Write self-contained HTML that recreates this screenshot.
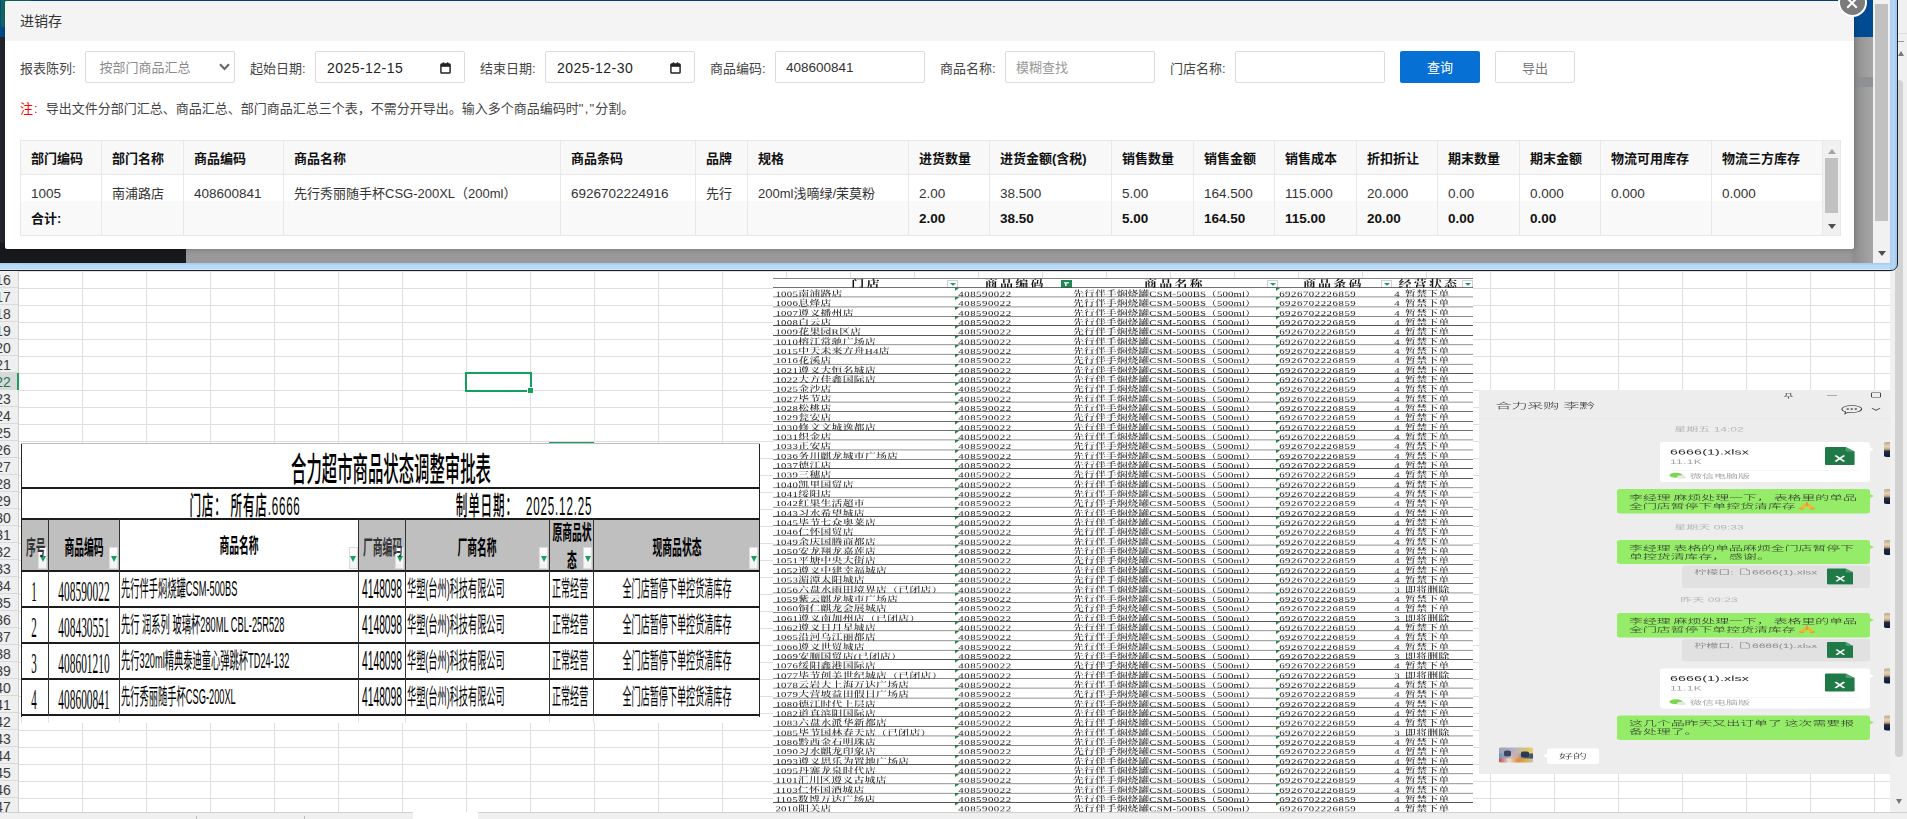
<!DOCTYPE html>
<html lang="zh-CN">
<head>
<meta charset="utf-8">
<title>进销存</title>
<style>
*{box-sizing:border-box;margin:0;padding:0}
html,body{width:1907px;height:819px;overflow:hidden;background:#fff}
body{position:relative;font-family:"Liberation Sans","Noto Sans CJK SC",sans-serif;font-size:13px;color:#333}
.abs{position:absolute}
/* ---------- excel sheet ---------- */
#sheet{position:absolute;left:0;top:270px;width:1890px;height:542px;background:#fff;overflow:hidden}
#grid{position:absolute;left:18px;top:0;width:1872px;height:542px;
 background-image:
  linear-gradient(to right,transparent 63px,#dfdfdf 63px),
  linear-gradient(to bottom,transparent 16px,#dfdfdf 16px);
 background-size:64px 100%,100% 17px;background-position:1px 0,0 2px}
#rowhdr{position:absolute;left:0;top:0;width:19px;height:542px;background:#efefef;border-right:1px solid #cfcfcf;overflow:hidden}
#rowhdr div{position:absolute;left:0;width:18px;height:17px;border-bottom:1px solid #dadada}
#rowhdr div span{position:absolute;right:7.5px;top:0;line-height:19px;font-size:14px;color:#3c3c3c;letter-spacing:-.2px;white-space:nowrap}
#rowhdr div.sel{background:#d9d9d9;border-right:2px solid #14a05f;width:19px}
#rowhdr div.sel span{color:#1b7a4e;right:6.5px}
/* ---------- browser window chrome ---------- */
#win{position:absolute;left:0;top:0;width:1899px;height:271px;overflow:hidden}
#modal{position:absolute;left:5px;top:1px;width:1849px;height:248px;background:#fff;border-radius:2px;box-shadow:0 0 6px rgba(0,0,0,.25)}
#mtitle{position:absolute;left:0;top:0;width:100%;height:40px;background:#f4f4f4;border-radius:2px 2px 0 0;font-size:14px;line-height:40px;padding-left:15px;color:#333}
.lbl{position:absolute;top:52px;height:31px;line-height:31px;font-size:13px;color:#444;white-space:nowrap}
.inp{position:absolute;top:50px;width:150px;height:32px;border:1px solid #dcdcdc;border-radius:2px;background:#fff;line-height:32px;font-size:13px;padding-left:10px;white-space:nowrap;color:#333}
.btn{position:absolute;top:50px;width:80px;height:32px;line-height:34px;text-align:center;font-size:13px;border-radius:2px}
#tbl{position:absolute;left:15px;top:139px;width:1821px;height:96px;border:1px solid #e8e8e8;background:#fff;overflow:hidden}
#tbl .c{position:absolute;white-space:nowrap;padding-left:10px;border-right:1px solid #e8e8e8;overflow:hidden}
#tbl .h{top:0;height:34px;line-height:36px;font-weight:bold;background:#f8f8f8;color:#111;border-bottom:1px solid #e8e8e8}
#tbl .d{top:34px;height:26px;line-height:37px;color:#333}
#tbl .f{top:60px;height:35px;line-height:35px;font-weight:bold;background:#f9f9f9;color:#111}
.ft{position:absolute;white-space:nowrap;line-height:1;display:inline-block}
/* ---------- list picture ---------- */
#list{position:absolute;transform-origin:0 0;background:#fff;font-family:"Liberation Serif","Noto Serif CJK SC",serif;font-size:10.8px;color:#1a1a1a;overflow:hidden;will-change:transform}
#list .lr{font-weight:500}
#list .lh,#list .lr{position:relative;border-bottom:1.25px solid #4a4a4a;white-space:nowrap;overflow:hidden}
#list .lh{border-top:1.25px solid #666;font-weight:bold;font-size:13px;color:#111;letter-spacing:2.2px}
#list .lh span{position:absolute;top:0;transform:translateX(-50%)}
#list .lr span{position:absolute;top:0;letter-spacing:.35px}
#list .lr span.g{letter-spacing:.53px}
#list .lr span.g:before{content:"";position:absolute;left:-3px;top:0;border-top:4px solid #1d8a3a;border-right:4px solid transparent}
#list .lr b{display:inline-block;width:5px}
#list .fb{position:absolute;top:1.5px;width:11px;height:11px;background:#fff;border:.6px solid #d0d0d0}
#list .fb:after{content:"";position:absolute;left:2.2px;top:3.6px;border-left:3px solid transparent;border-right:3px solid transparent;border-top:4px solid #1f9a62}
#list .fbg{position:absolute;top:2px;width:11px;height:10px;background:#1f8a55}
#list .fbg:after{content:"";position:absolute;left:3px;top:2.5px;width:5px;height:5px;background:linear-gradient(#fff,#fff) 0 0/5px 1.5px no-repeat,linear-gradient(#fff,#fff) 1.7px 0/1.6px 5px no-repeat}
/* ---------- wechat picture ---------- */
#wx{position:absolute;width:412px;height:766.6px;background:#ededed;transform-origin:0 0;transform:scaleY(.5);overflow:hidden;will-change:transform;font-family:"Liberation Sans","Noto Sans CJK SC",sans-serif}
#wx .wb{position:absolute;background:#95ec69;border-radius:4px}
#wx .wt{position:absolute;font-size:13.9px;word-spacing:-1px;line-height:20px;color:#262626;white-space:nowrap;font-weight:300}
#wx .wts{position:absolute;left:130px;width:200px;text-align:center;font-size:12px;line-height:16px;color:#b4b4b4;white-space:nowrap}
</style>
</head>
<body>

<div id="sheet">
<div id="grid"></div>
<div id="rowhdr">
<div style="top:1px"><span>16</span></div>
<div style="top:18px"><span>17</span></div>
<div style="top:35px"><span>18</span></div>
<div style="top:52px"><span>19</span></div>
<div style="top:69px"><span>20</span></div>
<div style="top:86px"><span>21</span></div>
<div class="sel" style="top:103px"><span>22</span></div>
<div style="top:120px"><span>23</span></div>
<div style="top:137px"><span>24</span></div>
<div style="top:154px"><span>25</span></div>
<div style="top:171px"><span>26</span></div>
<div style="top:188px"><span>27</span></div>
<div style="top:205px"><span>28</span></div>
<div style="top:222px"><span>29</span></div>
<div style="top:239px"><span>30</span></div>
<div style="top:256px"><span>31</span></div>
<div style="top:273px"><span>32</span></div>
<div style="top:290px"><span>33</span></div>
<div style="top:307px"><span>34</span></div>
<div style="top:324px"><span>35</span></div>
<div style="top:341px"><span>36</span></div>
<div style="top:358px"><span>37</span></div>
<div style="top:375px"><span>38</span></div>
<div style="top:392px"><span>39</span></div>
<div style="top:409px"><span>40</span></div>
<div style="top:426px"><span>41</span></div>
<div style="top:443px"><span>42</span></div>
<div style="top:460px"><span>43</span></div>
<div style="top:477px"><span>44</span></div>
<div style="top:494px"><span>45</span></div>
<div style="top:511px"><span>46</span></div>
<div style="top:528px"><span>47</span></div>
<div style="top:545px"><span>48</span></div>
</div>
<div class="abs" style="left:465px;top:102px;width:67px;height:20px;border:2px solid #14a05f"></div>
<div class="abs" style="left:527px;top:117px;width:7px;height:7px;background:#14a05f;border:1px solid #fff"></div>
<div class="abs" style="left:549px;top:172px;width:45px;height:2px;background:#14a05f"></div>
<div class="abs" style="left:17px;top:103px;width:2px;height:17px;background:#14a05f"></div>
<div id="form">
<div class="abs" style="left:21px;top:173.5px;width:739px;height:279px;background:#fff;"></div>
<div class="abs" style="left:20.8px;top:446px;width:1px;height:6.5px;background:#e4e4e4;"></div>
<div class="abs" style="left:47.8px;top:446px;width:1px;height:6.5px;background:#e4e4e4;"></div>
<div class="abs" style="left:118.9px;top:446px;width:1px;height:6.5px;background:#e4e4e4;"></div>
<div class="abs" style="left:358.2px;top:446px;width:1px;height:6.5px;background:#e4e4e4;"></div>
<div class="abs" style="left:404.8px;top:446px;width:1px;height:6.5px;background:#e4e4e4;"></div>
<div class="abs" style="left:548.8px;top:446px;width:1px;height:6.5px;background:#e4e4e4;"></div>
<div class="abs" style="left:593.0px;top:446px;width:1px;height:6.5px;background:#e4e4e4;"></div>
<div class="abs" style="left:21.3px;top:249px;width:26.999999999999996px;height:52px;background:#bfbfbf;"></div>
<div class="abs" style="left:48.3px;top:249px;width:71.10000000000001px;height:52px;background:#bfbfbf;"></div>
<div class="abs" style="left:358.7px;top:249px;width:46.60000000000002px;height:52px;background:#bfbfbf;"></div>
<div class="abs" style="left:405.3px;top:249px;width:143.99999999999994px;height:52px;background:#bfbfbf;"></div>
<div class="abs" style="left:549.3px;top:249px;width:44.200000000000045px;height:52px;background:#bfbfbf;"></div>
<div class="abs" style="left:593.5px;top:249px;width:166.0px;height:52px;background:#bfbfbf;"></div>
<div class="abs" style="left:21px;top:173px;width:739px;height:1px;background:#bdbdbd;"></div>
<div class="abs" style="left:21px;top:217.2px;width:739px;height:1.6px;background:#1c1c1c;"></div>
<div class="abs" style="left:21px;top:248.10000000000002px;width:739px;height:1.8px;background:#1c1c1c;"></div>
<div class="abs" style="left:21px;top:300.0px;width:739px;height:2px;background:#1c1c1c;"></div>
<div class="abs" style="left:21px;top:336.1px;width:739px;height:1.8px;background:#1c1c1c;"></div>
<div class="abs" style="left:21px;top:372.1px;width:739px;height:1.8px;background:#1c1c1c;"></div>
<div class="abs" style="left:21px;top:408.1px;width:739px;height:1.8px;background:#1c1c1c;"></div>
<div class="abs" style="left:21px;top:444.1px;width:739px;height:1.8px;background:#1c1c1c;"></div>
<div class="abs" style="left:20.7px;top:173.5px;width:1.3px;height:273px;background:#222;"></div>
<div class="abs" style="left:759px;top:173.5px;width:1.4px;height:273px;background:#222;"></div>
<div class="abs" style="left:47.699999999999996px;top:249px;width:1.2px;height:197px;background:#333;"></div>
<div class="abs" style="left:118.80000000000001px;top:249px;width:1.2px;height:197px;background:#333;"></div>
<div class="abs" style="left:358.09999999999997px;top:249px;width:1.2px;height:197px;background:#333;"></div>
<div class="abs" style="left:404.7px;top:249px;width:1.2px;height:197px;background:#333;"></div>
<div class="abs" style="left:548.6999999999999px;top:249px;width:1.2px;height:197px;background:#333;"></div>
<div class="abs" style="left:592.9px;top:249px;width:1.2px;height:197px;background:#333;"></div>
<div class="abs" style="left:38.099999999999994px;top:277.29999999999995px;width:9px;height:22.2px;background:linear-gradient(to bottom,#ffffff,#f2f2f2);border:0.5px solid #dcdcdc"></div>
<div class="abs" style="left:39.699999999999996px;top:285.9px;width:0;height:0;border-left:3px solid transparent;border-right:3px solid transparent;border-top:6px solid #1a9e63"></div>
<div class="abs" style="left:109.2px;top:277.29999999999995px;width:9px;height:22.2px;background:linear-gradient(to bottom,#ffffff,#f2f2f2);border:0.5px solid #dcdcdc"></div>
<div class="abs" style="left:110.8px;top:285.9px;width:0;height:0;border-left:3px solid transparent;border-right:3px solid transparent;border-top:6px solid #1a9e63"></div>
<div class="abs" style="left:348.5px;top:277.29999999999995px;width:9px;height:22.2px;background:linear-gradient(to bottom,#ffffff,#f2f2f2);border:0.5px solid #dcdcdc"></div>
<div class="abs" style="left:350.1px;top:285.9px;width:0;height:0;border-left:3px solid transparent;border-right:3px solid transparent;border-top:6px solid #1a9e63"></div>
<div class="abs" style="left:395.1px;top:277.29999999999995px;width:9px;height:22.2px;background:linear-gradient(to bottom,#ffffff,#f2f2f2);border:0.5px solid #dcdcdc"></div>
<div class="abs" style="left:396.70000000000005px;top:285.9px;width:0;height:0;border-left:3px solid transparent;border-right:3px solid transparent;border-top:6px solid #1a9e63"></div>
<div class="abs" style="left:539.0999999999999px;top:277.29999999999995px;width:9px;height:22.2px;background:linear-gradient(to bottom,#ffffff,#f2f2f2);border:0.5px solid #dcdcdc"></div>
<div class="abs" style="left:540.6999999999999px;top:285.9px;width:0;height:0;border-left:3px solid transparent;border-right:3px solid transparent;border-top:6px solid #1a9e63"></div>
<div class="abs" style="left:583.3px;top:277.29999999999995px;width:9px;height:22.2px;background:linear-gradient(to bottom,#ffffff,#f2f2f2);border:0.5px solid #dcdcdc"></div>
<div class="abs" style="left:584.9px;top:285.9px;width:0;height:0;border-left:3px solid transparent;border-right:3px solid transparent;border-top:6px solid #1a9e63"></div>
<div class="abs" style="left:749.3px;top:277.29999999999995px;width:9px;height:22.2px;background:linear-gradient(to bottom,#ffffff,#f2f2f2);border:0.5px solid #dcdcdc"></div>
<div class="abs" style="left:750.9px;top:285.9px;width:0;height:0;border-left:3px solid transparent;border-right:3px solid transparent;border-top:6px solid #1a9e63"></div>
<span class="ft" style="left:390.5px;top:198.5px;font-size:33px;font-weight:500;font-family:'Liberation Sans','Noto Sans CJK SC',sans-serif;color:#000;transform:translate(-50%,-50%) scaleX(0.466);">合力超市商品状态调整审批表</span>
<span class="ft" style="left:244.5px;top:235.5px;font-size:26px;font-weight:500;font-family:'Liberation Sans','Noto Sans CJK SC',sans-serif;color:#000;transform:translate(-50%,-50%) scaleX(0.445);letter-spacing:1.8px">门店： 所有店.6666</span>
<span class="ft" style="left:524px;top:235.5px;font-size:26px;font-weight:500;font-family:'Liberation Sans','Noto Sans CJK SC',sans-serif;color:#000;transform:translate(-50%,-50%) scaleX(0.445);letter-spacing:1.9px">制单日期：&nbsp; 2025.12.25</span>
<div class="abs" style="left:22.3px;top:265px;width:23.999999999999996px;height:26px;overflow:hidden"><span class="ft" style="left:4px;top:13px;font-size:20px;font-weight:bold;transform-origin:0 50%;transform:translateY(-50%) scaleX(.49)">序号</span></div>
<span class="ft" style="left:84.35px;top:277.5px;font-size:20px;font-weight:bold;font-family:'Liberation Sans','Noto Sans CJK SC',sans-serif;color:#000;transform:translate(-50%,-50%) scaleX(0.49);">商品编码</span>
<span class="ft" style="left:239.05px;top:276px;font-size:20px;font-weight:bold;font-family:'Liberation Sans','Noto Sans CJK SC',sans-serif;color:#000;transform:translate(-50%,-50%) scaleX(0.49);">商品名称</span>
<div class="abs" style="left:359.7px;top:265px;width:43.60000000000002px;height:26px;overflow:hidden"><span class="ft" style="left:3px;top:13px;font-size:20px;font-weight:bold;transform-origin:0 50%;transform:translateY(-50%) scaleX(.49)">厂商编码</span></div>
<span class="ft" style="left:477.29999999999995px;top:277.5px;font-size:20px;font-weight:bold;font-family:'Liberation Sans','Noto Sans CJK SC',sans-serif;color:#000;transform:translate(-50%,-50%) scaleX(0.49);">厂商名称</span>
<span class="ft" style="left:676.5px;top:277.5px;font-size:20px;font-weight:bold;font-family:'Liberation Sans','Noto Sans CJK SC',sans-serif;color:#000;transform:translate(-50%,-50%) scaleX(0.49);">现商品状态</span>
<span class="ft" style="left:571.5px;top:263px;font-size:20px;font-weight:bold;font-family:'Liberation Sans','Noto Sans CJK SC',sans-serif;color:#000;transform:translate(-50%,-50%) scaleX(0.49);">原商品状</span>
<span class="ft" style="left:572px;top:290.5px;font-size:20px;font-weight:bold;font-family:'Liberation Sans','Noto Sans CJK SC',sans-serif;color:#000;transform:translate(-50%,-50%) scaleX(0.49);">态</span>
<span class="ft" style="left:34.2px;top:321.0px;font-size:29px;font-weight:normal;font-family:'Liberation Serif','Noto Serif CJK SC',serif;color:#000;transform:translate(-50%,-50%) scaleX(0.38);">1</span>
<span class="ft" style="left:84.2px;top:321.5px;font-size:28.5px;font-weight:normal;font-family:'Liberation Serif','Noto Serif CJK SC',serif;color:#000;transform:translate(-50%,-50%) scaleX(0.4);">408590022</span>
<span class="ft" style="left:120.6px;top:318.70000000000005px;font-size:22px;font-weight:normal;font-family:'Liberation Sans','Noto Sans CJK SC',sans-serif;color:#000;transform-origin:0 50%;transform:translateY(-50%) scaleX(0.421);">先行伴手焖烧罐CSM-500BS</span>
<span class="ft" style="left:382px;top:318.5px;font-size:27.5px;font-weight:normal;font-family:'Liberation Sans','Noto Sans CJK SC',sans-serif;color:#000;transform:translate(-50%,-50%) scaleX(0.375);">4148098</span>
<span class="ft" style="left:406.8px;top:319.0px;font-size:22px;font-weight:normal;font-family:'Liberation Sans','Noto Sans CJK SC',sans-serif;color:#000;transform-origin:0 50%;transform:translateY(-50%) scaleX(0.416);">华塑(台州)科技有限公司</span>
<span class="ft" style="left:551.5px;top:319.0px;font-size:22px;font-weight:normal;font-family:'Liberation Sans','Noto Sans CJK SC',sans-serif;color:#000;transform-origin:0 50%;transform:translateY(-50%) scaleX(0.411);">正常经营</span>
<span class="ft" style="left:676.5px;top:319.0px;font-size:22px;font-weight:normal;font-family:'Liberation Sans','Noto Sans CJK SC',sans-serif;color:#000;transform:translate(-50%,-50%) scaleX(0.413);">全门店暂停下单控货清库存</span>
<span class="ft" style="left:34.2px;top:357.0px;font-size:29px;font-weight:normal;font-family:'Liberation Serif','Noto Serif CJK SC',serif;color:#000;transform:translate(-50%,-50%) scaleX(0.38);">2</span>
<span class="ft" style="left:84.2px;top:357.5px;font-size:28.5px;font-weight:normal;font-family:'Liberation Serif','Noto Serif CJK SC',serif;color:#000;transform:translate(-50%,-50%) scaleX(0.4);">408430551</span>
<span class="ft" style="left:120.6px;top:354.70000000000005px;font-size:22px;font-weight:normal;font-family:'Liberation Sans','Noto Sans CJK SC',sans-serif;color:#000;transform-origin:0 50%;transform:translateY(-50%) scaleX(0.421);">先行 润系列 玻璃杯280ML CBL-25R528</span>
<span class="ft" style="left:382px;top:354.5px;font-size:27.5px;font-weight:normal;font-family:'Liberation Sans','Noto Sans CJK SC',sans-serif;color:#000;transform:translate(-50%,-50%) scaleX(0.375);">4148098</span>
<span class="ft" style="left:406.8px;top:355.0px;font-size:22px;font-weight:normal;font-family:'Liberation Sans','Noto Sans CJK SC',sans-serif;color:#000;transform-origin:0 50%;transform:translateY(-50%) scaleX(0.416);">华塑(台州)科技有限公司</span>
<span class="ft" style="left:551.5px;top:355.0px;font-size:22px;font-weight:normal;font-family:'Liberation Sans','Noto Sans CJK SC',sans-serif;color:#000;transform-origin:0 50%;transform:translateY(-50%) scaleX(0.411);">正常经营</span>
<span class="ft" style="left:676.5px;top:355.0px;font-size:22px;font-weight:normal;font-family:'Liberation Sans','Noto Sans CJK SC',sans-serif;color:#000;transform:translate(-50%,-50%) scaleX(0.413);">全门店暂停下单控货清库存</span>
<span class="ft" style="left:34.2px;top:393.0px;font-size:29px;font-weight:normal;font-family:'Liberation Serif','Noto Serif CJK SC',serif;color:#000;transform:translate(-50%,-50%) scaleX(0.38);">3</span>
<span class="ft" style="left:84.2px;top:393.5px;font-size:28.5px;font-weight:normal;font-family:'Liberation Serif','Noto Serif CJK SC',serif;color:#000;transform:translate(-50%,-50%) scaleX(0.4);">408601210</span>
<span class="ft" style="left:120.6px;top:390.70000000000005px;font-size:22px;font-weight:normal;font-family:'Liberation Sans','Noto Sans CJK SC',sans-serif;color:#000;transform-origin:0 50%;transform:translateY(-50%) scaleX(0.421);">先行320ml精典泰迪童心弹跳杯TD24-132</span>
<span class="ft" style="left:382px;top:390.5px;font-size:27.5px;font-weight:normal;font-family:'Liberation Sans','Noto Sans CJK SC',sans-serif;color:#000;transform:translate(-50%,-50%) scaleX(0.375);">4148098</span>
<span class="ft" style="left:406.8px;top:391.0px;font-size:22px;font-weight:normal;font-family:'Liberation Sans','Noto Sans CJK SC',sans-serif;color:#000;transform-origin:0 50%;transform:translateY(-50%) scaleX(0.416);">华塑(台州)科技有限公司</span>
<span class="ft" style="left:551.5px;top:391.0px;font-size:22px;font-weight:normal;font-family:'Liberation Sans','Noto Sans CJK SC',sans-serif;color:#000;transform-origin:0 50%;transform:translateY(-50%) scaleX(0.411);">正常经营</span>
<span class="ft" style="left:676.5px;top:391.0px;font-size:22px;font-weight:normal;font-family:'Liberation Sans','Noto Sans CJK SC',sans-serif;color:#000;transform:translate(-50%,-50%) scaleX(0.413);">全门店暂停下单控货清库存</span>
<span class="ft" style="left:34.2px;top:429.25px;font-size:29px;font-weight:normal;font-family:'Liberation Serif','Noto Serif CJK SC',serif;color:#000;transform:translate(-50%,-50%) scaleX(0.38);">4</span>
<span class="ft" style="left:84.2px;top:429.75px;font-size:28.5px;font-weight:normal;font-family:'Liberation Serif','Noto Serif CJK SC',serif;color:#000;transform:translate(-50%,-50%) scaleX(0.4);">408600841</span>
<span class="ft" style="left:120.6px;top:426.95000000000005px;font-size:22px;font-weight:normal;font-family:'Liberation Sans','Noto Sans CJK SC',sans-serif;color:#000;transform-origin:0 50%;transform:translateY(-50%) scaleX(0.421);">先行秀丽随手杯CSG-200XL</span>
<span class="ft" style="left:382px;top:426.75px;font-size:27.5px;font-weight:normal;font-family:'Liberation Sans','Noto Sans CJK SC',sans-serif;color:#000;transform:translate(-50%,-50%) scaleX(0.375);">4148098</span>
<span class="ft" style="left:406.8px;top:427.25px;font-size:22px;font-weight:normal;font-family:'Liberation Sans','Noto Sans CJK SC',sans-serif;color:#000;transform-origin:0 50%;transform:translateY(-50%) scaleX(0.416);">华塑(台州)科技有限公司</span>
<span class="ft" style="left:551.5px;top:427.25px;font-size:22px;font-weight:normal;font-family:'Liberation Sans','Noto Sans CJK SC',sans-serif;color:#000;transform-origin:0 50%;transform:translateY(-50%) scaleX(0.411);">正常经营</span>
<span class="ft" style="left:676.5px;top:427.25px;font-size:22px;font-weight:normal;font-family:'Liberation Sans','Noto Sans CJK SC',sans-serif;color:#000;transform:translate(-50%,-50%) scaleX(0.413);">全门店暂停下单控货清库存</span>
</div>
<div id="list" style="left:773.4px;top:8.199999999999989px;width:699.6px;height:748.62px;transform:scaleY(0.715)">
<div class="lh" style="height:13.85px;line-height:13.85px">
<span style="left:93.4px">门店</span>
<span style="left:242.2px">商品编码</span>
<span style="left:401.4px">商品名称</span>
<span style="left:560.3px">商品条码</span>
<span style="left:655.9px">经营状态</span>
<i class="fb" style="left:173.8px"></i>
<i class="fb" style="left:494.2px"></i>
<i class="fb" style="left:608.3px"></i>
<i class="fb" style="left:689.1px"></i>
<i class="fbg" style="left:287.6px"></i>
</div>
<div class="lr" style="height:13.359px;line-height:16.159px"><span style="left:2.4px;letter-spacing:.32px">1005南浦路店</span><span class="g" style="left:185.3px">408590022</span><span style="left:300.1px;letter-spacing:.1px">先行伴手焖烧罐CSM-500BS（500ml）</span><span class="g" style="left:506.2px">6926702226859</span><span style="left:621.3px">4<b></b>暂禁下单</span></div>
<div class="lr" style="height:13.359px;line-height:16.159px"><span style="left:2.4px;letter-spacing:.32px">1006息烽店</span><span class="g" style="left:185.3px">408590022</span><span style="left:300.1px;letter-spacing:.1px">先行伴手焖烧罐CSM-500BS（500ml）</span><span class="g" style="left:506.2px">6926702226859</span><span style="left:621.3px">4<b></b>暂禁下单</span></div>
<div class="lr" style="height:13.359px;line-height:16.159px"><span style="left:2.4px;letter-spacing:.32px">1007遵义播州店</span><span class="g" style="left:185.3px">408590022</span><span style="left:300.1px;letter-spacing:.1px">先行伴手焖烧罐CSM-500BS（500ml）</span><span class="g" style="left:506.2px">6926702226859</span><span style="left:621.3px">4<b></b>暂禁下单</span></div>
<div class="lr" style="height:13.359px;line-height:16.159px"><span style="left:2.4px;letter-spacing:.32px">1008白云店</span><span class="g" style="left:185.3px">408590022</span><span style="left:300.1px;letter-spacing:.1px">先行伴手焖烧罐CSM-500BS（500ml）</span><span class="g" style="left:506.2px">6926702226859</span><span style="left:621.3px">4<b></b>暂禁下单</span></div>
<div class="lr" style="height:13.359px;line-height:16.159px"><span style="left:2.4px;letter-spacing:.32px">1009花果园R区店</span><span class="g" style="left:185.3px">408590022</span><span style="left:300.1px;letter-spacing:.1px">先行伴手焖烧罐CSM-500BS（500ml）</span><span class="g" style="left:506.2px">6926702226859</span><span style="left:621.3px">4<b></b>暂禁下单</span></div>
<div class="lr" style="height:13.359px;line-height:16.159px"><span style="left:2.4px;letter-spacing:.32px">1010榕江常驰广场店</span><span class="g" style="left:185.3px">408590022</span><span style="left:300.1px;letter-spacing:.1px">先行伴手焖烧罐CSM-500BS（500ml）</span><span class="g" style="left:506.2px">6926702226859</span><span style="left:621.3px">4<b></b>暂禁下单</span></div>
<div class="lr" style="height:13.359px;line-height:16.159px"><span style="left:2.4px;letter-spacing:.32px">1015中天未来方舟H4店</span><span class="g" style="left:185.3px">408590022</span><span style="left:300.1px;letter-spacing:.1px">先行伴手焖烧罐CSM-500BS（500ml）</span><span class="g" style="left:506.2px">6926702226859</span><span style="left:621.3px">4<b></b>暂禁下单</span></div>
<div class="lr" style="height:13.359px;line-height:16.159px"><span style="left:2.4px;letter-spacing:.32px">1016花溪店</span><span class="g" style="left:185.3px">408590022</span><span style="left:300.1px;letter-spacing:.1px">先行伴手焖烧罐CSM-500BS（500ml）</span><span class="g" style="left:506.2px">6926702226859</span><span style="left:621.3px">4<b></b>暂禁下单</span></div>
<div class="lr" style="height:13.359px;line-height:16.159px"><span style="left:2.4px;letter-spacing:.32px">1021遵义大恒名城店</span><span class="g" style="left:185.3px">408590022</span><span style="left:300.1px;letter-spacing:.1px">先行伴手焖烧罐CSM-500BS（500ml）</span><span class="g" style="left:506.2px">6926702226859</span><span style="left:621.3px">4<b></b>暂禁下单</span></div>
<div class="lr" style="height:13.359px;line-height:16.159px"><span style="left:2.4px;letter-spacing:.32px">1022大方佳鑫国际店</span><span class="g" style="left:185.3px">408590022</span><span style="left:300.1px;letter-spacing:.1px">先行伴手焖烧罐CSM-500BS（500ml）</span><span class="g" style="left:506.2px">6926702226859</span><span style="left:621.3px">4<b></b>暂禁下单</span></div>
<div class="lr" style="height:13.359px;line-height:16.159px"><span style="left:2.4px;letter-spacing:.32px">1025金沙店</span><span class="g" style="left:185.3px">408590022</span><span style="left:300.1px;letter-spacing:.1px">先行伴手焖烧罐CSM-500BS（500ml）</span><span class="g" style="left:506.2px">6926702226859</span><span style="left:621.3px">4<b></b>暂禁下单</span></div>
<div class="lr" style="height:13.359px;line-height:16.159px"><span style="left:2.4px;letter-spacing:.32px">1027毕节店</span><span class="g" style="left:185.3px">408590022</span><span style="left:300.1px;letter-spacing:.1px">先行伴手焖烧罐CSM-500BS（500ml）</span><span class="g" style="left:506.2px">6926702226859</span><span style="left:621.3px">4<b></b>暂禁下单</span></div>
<div class="lr" style="height:13.359px;line-height:16.159px"><span style="left:2.4px;letter-spacing:.32px">1028松桃店</span><span class="g" style="left:185.3px">408590022</span><span style="left:300.1px;letter-spacing:.1px">先行伴手焖烧罐CSM-500BS（500ml）</span><span class="g" style="left:506.2px">6926702226859</span><span style="left:621.3px">4<b></b>暂禁下单</span></div>
<div class="lr" style="height:13.359px;line-height:16.159px"><span style="left:2.4px;letter-spacing:.32px">1029瓮安店</span><span class="g" style="left:185.3px">408590022</span><span style="left:300.1px;letter-spacing:.1px">先行伴手焖烧罐CSM-500BS（500ml）</span><span class="g" style="left:506.2px">6926702226859</span><span style="left:621.3px">4<b></b>暂禁下单</span></div>
<div class="lr" style="height:13.359px;line-height:16.159px"><span style="left:2.4px;letter-spacing:.32px">1030修文文城逸都店</span><span class="g" style="left:185.3px">408590022</span><span style="left:300.1px;letter-spacing:.1px">先行伴手焖烧罐CSM-500BS（500ml）</span><span class="g" style="left:506.2px">6926702226859</span><span style="left:621.3px">4<b></b>暂禁下单</span></div>
<div class="lr" style="height:13.359px;line-height:16.159px"><span style="left:2.4px;letter-spacing:.32px">1031织金店</span><span class="g" style="left:185.3px">408590022</span><span style="left:300.1px;letter-spacing:.1px">先行伴手焖烧罐CSM-500BS（500ml）</span><span class="g" style="left:506.2px">6926702226859</span><span style="left:621.3px">4<b></b>暂禁下单</span></div>
<div class="lr" style="height:13.359px;line-height:16.159px"><span style="left:2.4px;letter-spacing:.32px">1033正安店</span><span class="g" style="left:185.3px">408590022</span><span style="left:300.1px;letter-spacing:.1px">先行伴手焖烧罐CSM-500BS（500ml）</span><span class="g" style="left:506.2px">6926702226859</span><span style="left:621.3px">4<b></b>暂禁下单</span></div>
<div class="lr" style="height:13.359px;line-height:16.159px"><span style="left:2.4px;letter-spacing:.32px">1036务川麒龙城市广场店</span><span class="g" style="left:185.3px">408590022</span><span style="left:300.1px;letter-spacing:.1px">先行伴手焖烧罐CSM-500BS（500ml）</span><span class="g" style="left:506.2px">6926702226859</span><span style="left:621.3px">4<b></b>暂禁下单</span></div>
<div class="lr" style="height:13.359px;line-height:16.159px"><span style="left:2.4px;letter-spacing:.32px">1037德江店</span><span class="g" style="left:185.3px">408590022</span><span style="left:300.1px;letter-spacing:.1px">先行伴手焖烧罐CSM-500BS（500ml）</span><span class="g" style="left:506.2px">6926702226859</span><span style="left:621.3px">4<b></b>暂禁下单</span></div>
<div class="lr" style="height:13.359px;line-height:16.159px"><span style="left:2.4px;letter-spacing:.32px">1039三穗店</span><span class="g" style="left:185.3px">408590022</span><span style="left:300.1px;letter-spacing:.1px">先行伴手焖烧罐CSM-500BS（500ml）</span><span class="g" style="left:506.2px">6926702226859</span><span style="left:621.3px">4<b></b>暂禁下单</span></div>
<div class="lr" style="height:13.359px;line-height:16.159px"><span style="left:2.4px;letter-spacing:.32px">1040凯里国贸店</span><span class="g" style="left:185.3px">408590022</span><span style="left:300.1px;letter-spacing:.1px">先行伴手焖烧罐CSM-500BS（500ml）</span><span class="g" style="left:506.2px">6926702226859</span><span style="left:621.3px">4<b></b>暂禁下单</span></div>
<div class="lr" style="height:13.359px;line-height:16.159px"><span style="left:2.4px;letter-spacing:.32px">1041绥阳店</span><span class="g" style="left:185.3px">408590022</span><span style="left:300.1px;letter-spacing:.1px">先行伴手焖烧罐CSM-500BS（500ml）</span><span class="g" style="left:506.2px">6926702226859</span><span style="left:621.3px">4<b></b>暂禁下单</span></div>
<div class="lr" style="height:13.359px;line-height:16.159px"><span style="left:2.4px;letter-spacing:.32px">1042红果生活超市</span><span class="g" style="left:185.3px">408590022</span><span style="left:300.1px;letter-spacing:.1px">先行伴手焖烧罐CSM-500BS（500ml）</span><span class="g" style="left:506.2px">6926702226859</span><span style="left:621.3px">4<b></b>暂禁下单</span></div>
<div class="lr" style="height:13.359px;line-height:16.159px"><span style="left:2.4px;letter-spacing:.32px">1043习水希望城店</span><span class="g" style="left:185.3px">408590022</span><span style="left:300.1px;letter-spacing:.1px">先行伴手焖烧罐CSM-500BS（500ml）</span><span class="g" style="left:506.2px">6926702226859</span><span style="left:621.3px">4<b></b>暂禁下单</span></div>
<div class="lr" style="height:13.359px;line-height:16.159px"><span style="left:2.4px;letter-spacing:.32px">1045毕节七众奥莱店</span><span class="g" style="left:185.3px">408590022</span><span style="left:300.1px;letter-spacing:.1px">先行伴手焖烧罐CSM-500BS（500ml）</span><span class="g" style="left:506.2px">6926702226859</span><span style="left:621.3px">4<b></b>暂禁下单</span></div>
<div class="lr" style="height:13.359px;line-height:16.159px"><span style="left:2.4px;letter-spacing:.32px">1046仁怀国贸店</span><span class="g" style="left:185.3px">408590022</span><span style="left:300.1px;letter-spacing:.1px">先行伴手焖烧罐CSM-500BS（500ml）</span><span class="g" style="left:506.2px">6926702226859</span><span style="left:621.3px">4<b></b>暂禁下单</span></div>
<div class="lr" style="height:13.359px;line-height:16.159px"><span style="left:2.4px;letter-spacing:.32px">1049余庆国腾商都店</span><span class="g" style="left:185.3px">408590022</span><span style="left:300.1px;letter-spacing:.1px">先行伴手焖烧罐CSM-500BS（500ml）</span><span class="g" style="left:506.2px">6926702226859</span><span style="left:621.3px">4<b></b>暂禁下单</span></div>
<div class="lr" style="height:13.359px;line-height:16.159px"><span style="left:2.4px;letter-spacing:.32px">1050安龙翔龙嘉莲店</span><span class="g" style="left:185.3px">408590022</span><span style="left:300.1px;letter-spacing:.1px">先行伴手焖烧罐CSM-500BS（500ml）</span><span class="g" style="left:506.2px">6926702226859</span><span style="left:621.3px">4<b></b>暂禁下单</span></div>
<div class="lr" style="height:13.359px;line-height:16.159px"><span style="left:2.4px;letter-spacing:.32px">1051平塘中央大街店</span><span class="g" style="left:185.3px">408590022</span><span style="left:300.1px;letter-spacing:.1px">先行伴手焖烧罐CSM-500BS（500ml）</span><span class="g" style="left:506.2px">6926702226859</span><span style="left:621.3px">4<b></b>暂禁下单</span></div>
<div class="lr" style="height:13.359px;line-height:16.159px"><span style="left:2.4px;letter-spacing:.32px">1052遵义中建幸福城店</span><span class="g" style="left:185.3px">408590022</span><span style="left:300.1px;letter-spacing:.1px">先行伴手焖烧罐CSM-500BS（500ml）</span><span class="g" style="left:506.2px">6926702226859</span><span style="left:621.3px">4<b></b>暂禁下单</span></div>
<div class="lr" style="height:13.359px;line-height:16.159px"><span style="left:2.4px;letter-spacing:.32px">1053湄潭太阳城店</span><span class="g" style="left:185.3px">408590022</span><span style="left:300.1px;letter-spacing:.1px">先行伴手焖烧罐CSM-500BS（500ml）</span><span class="g" style="left:506.2px">6926702226859</span><span style="left:621.3px">4<b></b>暂禁下单</span></div>
<div class="lr" style="height:13.359px;line-height:16.159px"><span style="left:2.4px;letter-spacing:.32px">1056六盘水雨田境界店（已闭店）</span><span class="g" style="left:185.3px">408590022</span><span style="left:300.1px;letter-spacing:.1px">先行伴手焖烧罐CSM-500BS（500ml）</span><span class="g" style="left:506.2px">6926702226859</span><span style="left:621.3px">3<b></b>即将删除</span></div>
<div class="lr" style="height:13.359px;line-height:16.159px"><span style="left:2.4px;letter-spacing:.32px">1059紫云麒龙城市广场店</span><span class="g" style="left:185.3px">408590022</span><span style="left:300.1px;letter-spacing:.1px">先行伴手焖烧罐CSM-500BS（500ml）</span><span class="g" style="left:506.2px">6926702226859</span><span style="left:621.3px">4<b></b>暂禁下单</span></div>
<div class="lr" style="height:13.359px;line-height:16.159px"><span style="left:2.4px;letter-spacing:.32px">1060铜仁麒龙会展城店</span><span class="g" style="left:185.3px">408590022</span><span style="left:300.1px;letter-spacing:.1px">先行伴手焖烧罐CSM-500BS（500ml）</span><span class="g" style="left:506.2px">6926702226859</span><span style="left:621.3px">4<b></b>暂禁下单</span></div>
<div class="lr" style="height:13.359px;line-height:16.159px"><span style="left:2.4px;letter-spacing:.32px">1061遵义南加州店（已闭店）</span><span class="g" style="left:185.3px">408590022</span><span style="left:300.1px;letter-spacing:.1px">先行伴手焖烧罐CSM-500BS（500ml）</span><span class="g" style="left:506.2px">6926702226859</span><span style="left:621.3px">3<b></b>即将删除</span></div>
<div class="lr" style="height:13.359px;line-height:16.159px"><span style="left:2.4px;letter-spacing:.32px">1062遵义日月星城店</span><span class="g" style="left:185.3px">408590022</span><span style="left:300.1px;letter-spacing:.1px">先行伴手焖烧罐CSM-500BS（500ml）</span><span class="g" style="left:506.2px">6926702226859</span><span style="left:621.3px">4<b></b>暂禁下单</span></div>
<div class="lr" style="height:13.359px;line-height:16.159px"><span style="left:2.4px;letter-spacing:.32px">1065沿河乌江丽都店</span><span class="g" style="left:185.3px">408590022</span><span style="left:300.1px;letter-spacing:.1px">先行伴手焖烧罐CSM-500BS（500ml）</span><span class="g" style="left:506.2px">6926702226859</span><span style="left:621.3px">4<b></b>暂禁下单</span></div>
<div class="lr" style="height:13.359px;line-height:16.159px"><span style="left:2.4px;letter-spacing:.32px">1066遵义世贸城店</span><span class="g" style="left:185.3px">408590022</span><span style="left:300.1px;letter-spacing:.1px">先行伴手焖烧罐CSM-500BS（500ml）</span><span class="g" style="left:506.2px">6926702226859</span><span style="left:621.3px">4<b></b>暂禁下单</span></div>
<div class="lr" style="height:13.359px;line-height:16.159px"><span style="left:2.4px;letter-spacing:.32px">1069安顺国贸店(已闭店）</span><span class="g" style="left:185.3px">408590022</span><span style="left:300.1px;letter-spacing:.1px">先行伴手焖烧罐CSM-500BS（500ml）</span><span class="g" style="left:506.2px">6926702226859</span><span style="left:621.3px">3<b></b>即将删除</span></div>
<div class="lr" style="height:13.359px;line-height:16.159px"><span style="left:2.4px;letter-spacing:.32px">1076绥阳鑫港国际店</span><span class="g" style="left:185.3px">408590022</span><span style="left:300.1px;letter-spacing:.1px">先行伴手焖烧罐CSM-500BS（500ml）</span><span class="g" style="left:506.2px">6926702226859</span><span style="left:621.3px">4<b></b>暂禁下单</span></div>
<div class="lr" style="height:13.359px;line-height:16.159px"><span style="left:2.4px;letter-spacing:.32px">1077毕节创美世纪城店（已闭店）</span><span class="g" style="left:185.3px">408590022</span><span style="left:300.1px;letter-spacing:.1px">先行伴手焖烧罐CSM-500BS（500ml）</span><span class="g" style="left:506.2px">6926702226859</span><span style="left:621.3px">3<b></b>即将删除</span></div>
<div class="lr" style="height:13.359px;line-height:16.159px"><span style="left:2.4px;letter-spacing:.32px">1078云岩大上海万达广场店</span><span class="g" style="left:185.3px">408590022</span><span style="left:300.1px;letter-spacing:.1px">先行伴手焖烧罐CSM-500BS（500ml）</span><span class="g" style="left:506.2px">6926702226859</span><span style="left:621.3px">4<b></b>暂禁下单</span></div>
<div class="lr" style="height:13.359px;line-height:16.159px"><span style="left:2.4px;letter-spacing:.32px">1079大营坡益田假日广场店</span><span class="g" style="left:185.3px">408590022</span><span style="left:300.1px;letter-spacing:.1px">先行伴手焖烧罐CSM-500BS（500ml）</span><span class="g" style="left:506.2px">6926702226859</span><span style="left:621.3px">4<b></b>暂禁下单</span></div>
<div class="lr" style="height:13.359px;line-height:16.159px"><span style="left:2.4px;letter-spacing:.32px">1080德江时代上层店</span><span class="g" style="left:185.3px">408590022</span><span style="left:300.1px;letter-spacing:.1px">先行伴手焖烧罐CSM-500BS（500ml）</span><span class="g" style="left:506.2px">6926702226859</span><span style="left:621.3px">4<b></b>暂禁下单</span></div>
<div class="lr" style="height:13.359px;line-height:16.159px"><span style="left:2.4px;letter-spacing:.32px">1082道真滨阳国际店</span><span class="g" style="left:185.3px">408590022</span><span style="left:300.1px;letter-spacing:.1px">先行伴手焖烧罐CSM-500BS（500ml）</span><span class="g" style="left:506.2px">6926702226859</span><span style="left:621.3px">4<b></b>暂禁下单</span></div>
<div class="lr" style="height:13.359px;line-height:16.159px"><span style="left:2.4px;letter-spacing:.32px">1083六盘水派华新都店</span><span class="g" style="left:185.3px">408590022</span><span style="left:300.1px;letter-spacing:.1px">先行伴手焖烧罐CSM-500BS（500ml）</span><span class="g" style="left:506.2px">6926702226859</span><span style="left:621.3px">4<b></b>暂禁下单</span></div>
<div class="lr" style="height:13.359px;line-height:16.159px"><span style="left:2.4px;letter-spacing:.32px">1085毕节国林春天店（已闭店）</span><span class="g" style="left:185.3px">408590022</span><span style="left:300.1px;letter-spacing:.1px">先行伴手焖烧罐CSM-500BS（500ml）</span><span class="g" style="left:506.2px">6926702226859</span><span style="left:621.3px">3<b></b>即将删除</span></div>
<div class="lr" style="height:13.359px;line-height:16.159px"><span style="left:2.4px;letter-spacing:.32px">1086黔西金石明珠店</span><span class="g" style="left:185.3px">408590022</span><span style="left:300.1px;letter-spacing:.1px">先行伴手焖烧罐CSM-500BS（500ml）</span><span class="g" style="left:506.2px">6926702226859</span><span style="left:621.3px">4<b></b>暂禁下单</span></div>
<div class="lr" style="height:13.359px;line-height:16.159px"><span style="left:2.4px;letter-spacing:.32px">1090习水麒龙印象店</span><span class="g" style="left:185.3px">408590022</span><span style="left:300.1px;letter-spacing:.1px">先行伴手焖烧罐CSM-500BS（500ml）</span><span class="g" style="left:506.2px">6926702226859</span><span style="left:621.3px">4<b></b>暂禁下单</span></div>
<div class="lr" style="height:13.359px;line-height:16.159px"><span style="left:2.4px;letter-spacing:.32px">1093遵义思乐为置地广场店</span><span class="g" style="left:185.3px">408590022</span><span style="left:300.1px;letter-spacing:.1px">先行伴手焖烧罐CSM-500BS（500ml）</span><span class="g" style="left:506.2px">6926702226859</span><span style="left:621.3px">4<b></b>暂禁下单</span></div>
<div class="lr" style="height:13.359px;line-height:16.159px"><span style="left:2.4px;letter-spacing:.32px">1095丹寨龙泉时代店</span><span class="g" style="left:185.3px">408590022</span><span style="left:300.1px;letter-spacing:.1px">先行伴手焖烧罐CSM-500BS（500ml）</span><span class="g" style="left:506.2px">6926702226859</span><span style="left:621.3px">4<b></b>暂禁下单</span></div>
<div class="lr" style="height:13.359px;line-height:16.159px"><span style="left:2.4px;letter-spacing:.32px">1101汇川区遵义古城店</span><span class="g" style="left:185.3px">408590022</span><span style="left:300.1px;letter-spacing:.1px">先行伴手焖烧罐CSM-500BS（500ml）</span><span class="g" style="left:506.2px">6926702226859</span><span style="left:621.3px">4<b></b>暂禁下单</span></div>
<div class="lr" style="height:13.359px;line-height:16.159px"><span style="left:2.4px;letter-spacing:.32px">1103仁怀国酒城店</span><span class="g" style="left:185.3px">408590022</span><span style="left:300.1px;letter-spacing:.1px">先行伴手焖烧罐CSM-500BS（500ml）</span><span class="g" style="left:506.2px">6926702226859</span><span style="left:621.3px">4<b></b>暂禁下单</span></div>
<div class="lr" style="height:13.359px;line-height:16.159px"><span style="left:2.4px;letter-spacing:.32px">1105数博万达广场店</span><span class="g" style="left:185.3px">408590022</span><span style="left:300.1px;letter-spacing:.1px">先行伴手焖烧罐CSM-500BS（500ml）</span><span class="g" style="left:506.2px">6926702226859</span><span style="left:621.3px">4<b></b>暂禁下单</span></div>
<div class="lr" style="height:13.359px;line-height:16.159px"><span style="left:2.4px;letter-spacing:.32px">2010阳关店</span><span class="g" style="left:185.3px">408590022</span><span style="left:300.1px;letter-spacing:.1px">先行伴手焖烧罐CSM-500BS（500ml）</span><span class="g" style="left:506.2px">6926702226859</span><span style="left:621.3px">4<b></b>暂禁下单</span></div>
</div>
<div id="wx" style="left:1479px;top:120.4px">
<div class="abs" style="left:0;top:0;width:412px;height:57px;border-bottom:1.6px solid #e0e0e0"></div>
<div class="abs" style="left:16.5px;top:20px;font-size:16px;line-height:24px;color:#2a2a2a;white-space:nowrap;letter-spacing:-.1px;font-weight:300">合力采购 李黔</div>
<svg class="abs" style="left:304px;top:4.5px" width="11" height="13" viewBox="0 0 13 16" preserveAspectRatio="none"><path d="M3 2H10M4 2V7L2 10H11L9 7V2M6.500 10V15" fill="none" stroke="#555" stroke-width="1.2"/></svg>
<div class="abs" style="left:348px;top:9.5px;width:10px;height:1.4px;background:#666"></div>
<div class="abs" style="left:391.7px;top:5.4px;width:10.6px;height:9.6px;border:1.2px solid #444;border-radius:1px"></div>
<svg class="abs" style="left:361.8px;top:28px" width="21.5" height="21" viewBox="0 0 24 24" preserveAspectRatio="none"><path d="M12 3.500C18.500 3.500 23 7 23 11.500S18.500 19.500 12 19.500C10.500 19.500 9 19.300 7.800 19L4.500 22.500L5 17.800C2.500 16.300 1 14 1 11.500C1 7 5.500 3.500 12 3.500Z" fill="none" stroke="#3a3a3a" stroke-width="1.3"/><circle cx="7.500" cy="11.500" r="1.500" fill="#3a3a3a"/><circle cx="12" cy="11.500" r="1.500" fill="#3a3a3a"/><circle cx="16.500" cy="11.500" r="1.500" fill="#3a3a3a"/></svg>
<svg class="abs" style="left:392px;top:33.500px" width="10" height="10" viewBox="0 0 10 10"><path d="M1 2.500L5 6.500L9 2.500" fill="none" stroke="#444" stroke-width="1.3"/></svg>
<div class="wts" style="top:70.6px">星期五 14:02</div>
<div class="abs" style="left:181px;top:104px;width:209.7px;height:79.6px;background:#fff;border-radius:4px"></div><div class="abs" style="left:390px;top:114px;width:0;height:0;border-top:5px solid transparent;border-bottom:5px solid transparent;border-left:5px solid #fff"></div><div class="abs" style="left:191px;top:113.5px;font-size:14.2px;line-height:20px;color:#262626;white-space:nowrap;letter-spacing:.15px">6666(1).xlsx</div><div class="abs" style="left:191px;top:133.5px;font-size:12px;line-height:20px;color:#a0a0a0;white-space:nowrap;letter-spacing:.3px">11.1K</div><div class="abs" style="left:191px;top:160.5px;width:189px;height:1.4px;background:#ececec"></div><svg class="abs" style="left:190px;top:165px" width="18" height="14" viewBox="0 0 18 14"><ellipse cx="7" cy="5.5" rx="6.5" ry="5" fill="#7bd84a"/><ellipse cx="12.5" cy="9" rx="4.5" ry="3.6" fill="#e6e6e6"/></svg><div class="abs" style="left:211px;top:162.5px;font-size:12px;line-height:20px;color:#a8a8a8;white-space:nowrap">微信电脑版</div><svg class="abs" style="left:346px;top:113.5px" width="29.6" height="36" viewBox="0 0 30 36" preserveAspectRatio="none"><path d="M1.5 0H21L30 9V34.5a1.5 1.5 0 0 1-1.5 1.5H1.5A1.5 1.5 0 0 1 0 34.5V1.5A1.5 1.5 0 0 1 1.5 0Z" fill="#1f7a48"/><path d="M21 0L30 9H22.5A1.5 1.5 0 0 1 21 7.5Z" fill="#4e9c70"/><path d="M10.5 17L19.5 29M19.5 17L10.5 29" stroke="#fff" stroke-width="2.4" fill="none"/></svg>
<div class="abs" style="left:404.6px;top:104px;width:30px;height:30px;border-radius:3px;background:linear-gradient(to bottom,#b9a88f 0,#e6d6b6 30%,#caa57a 48%,#1d2b45 62%,#0f1a30 100%)"></div>
<div class="wb" style="left:138.2px;top:198.4px;width:252.5px;height:49px"></div><div class="abs" style="left:390px;top:207.4px;width:0;height:0;border-top:5px solid transparent;border-bottom:5px solid transparent;border-left:5px solid #95ec69"></div><div class="wt" style="left:150px;top:205.4px">李经理 麻烦处理一下， 表格里的单品</div><div class="wt" style="left:150px;top:222px">全门店暂停下单控货清库存<svg style="display:inline-block;vertical-align:-3px;margin-left:2px" width="18" height="17" viewBox="0 0 18 17"><path d="M9 1C7.5 3 4 9 1 13.5L5.5 16C7 13 8.5 9 9 6.5C9.5 9 11 13 12.500 16L17 13.500C14 9 10.500 3 9 1Z" fill="#f5b335"/><path d="M9 1V10" stroke="#d18a1a" stroke-width="1"/><path d="M1 13.500L5.500 16M17 13.500L12.500 16" stroke="#e8952a" stroke-width="2"/></svg></div>
<div class="abs" style="left:404.6px;top:198.4px;width:30px;height:30px;border-radius:3px;background:linear-gradient(to bottom,#b9a88f 0,#e6d6b6 30%,#caa57a 48%,#1d2b45 62%,#0f1a30 100%)"></div>
<div class="wts" style="top:266.6px">星期天 09:33</div>
<div class="wb" style="left:138.2px;top:299.8px;width:252.5px;height:48.6px"></div><div class="abs" style="left:390px;top:308.8px;width:0;height:0;border-top:5px solid transparent;border-bottom:5px solid transparent;border-left:5px solid #95ec69"></div><div class="wt" style="left:150px;top:306px">李经理 表格的单品麻烦全门店暂停下</div><div class="wt" style="left:150px;top:323px">单控货清库存， 感谢。</div>
<div class="abs" style="left:404.6px;top:299.8px;width:30px;height:30px;border-radius:3px;background:linear-gradient(to bottom,#b9a88f 0,#e6d6b6 30%,#caa57a 48%,#1d2b45 62%,#0f1a30 100%)"></div>
<div class="abs" style="left:203.2px;top:351.4px;width:187.5px;height:44.2px;background:#e1e1e1;border-radius:4px"></div><div class="abs" style="left:215.3px;top:355.4px;font-size:12px;line-height:20px;color:#8c8c8c;white-space:nowrap">柠檬口:&nbsp;<svg style="display:inline-block;vertical-align:-1px;margin:0 2px 0 3px" width="10" height="13" viewBox="0 0 10 13"><path d="M.6 .6H6.500L9.400 3.600V12.400H.6Z M6.500 .6V3.600H9.400" fill="none" stroke="#9a9a9a" stroke-width="1"/></svg>6666(1).xlsx</div><svg class="abs" style="left:347.7px;top:357.2px" width="26.6" height="31.8" viewBox="0 0 30 36" preserveAspectRatio="none"><path d="M1.5 0H21L30 9V34.5a1.5 1.5 0 0 1-1.5 1.5H1.5A1.5 1.5 0 0 1 0 34.5V1.5A1.5 1.5 0 0 1 1.5 0Z" fill="#1f7a48"/><path d="M21 0L30 9H22.5A1.5 1.5 0 0 1 21 7.5Z" fill="#4e9c70"/><path d="M10.5 17L19.5 29M19.5 17L10.5 29" stroke="#fff" stroke-width="2.4" fill="none"/></svg>
<div class="wts" style="top:412.4px">昨天 09:23</div>
<div class="wb" style="left:138.2px;top:445.6px;width:252.5px;height:49.2px"></div><div class="abs" style="left:390px;top:454.6px;width:0;height:0;border-top:5px solid transparent;border-bottom:5px solid transparent;border-left:5px solid #95ec69"></div><div class="wt" style="left:150px;top:451.8px">李经理 麻烦处理一下， 表格里的单品</div><div class="wt" style="left:150px;top:469.2px">全门店暂停下单控货清库存<svg style="display:inline-block;vertical-align:-3px;margin-left:2px" width="18" height="17" viewBox="0 0 18 17"><path d="M9 1C7.5 3 4 9 1 13.5L5.5 16C7 13 8.5 9 9 6.5C9.5 9 11 13 12.500 16L17 13.500C14 9 10.500 3 9 1Z" fill="#f5b335"/><path d="M9 1V10" stroke="#d18a1a" stroke-width="1"/><path d="M1 13.500L5.500 16M17 13.500L12.500 16" stroke="#e8952a" stroke-width="2"/></svg></div>
<div class="abs" style="left:404.6px;top:445.6px;width:30px;height:30px;border-radius:3px;background:linear-gradient(to bottom,#b9a88f 0,#e6d6b6 30%,#caa57a 48%,#1d2b45 62%,#0f1a30 100%)"></div>
<div class="abs" style="left:203.2px;top:498.2px;width:187.5px;height:45.2px;background:#e1e1e1;border-radius:4px"></div><div class="abs" style="left:215.3px;top:502.2px;font-size:12px;line-height:20px;color:#8c8c8c;white-space:nowrap">柠檬口:&nbsp;<svg style="display:inline-block;vertical-align:-1px;margin:0 2px 0 3px" width="10" height="13" viewBox="0 0 10 13"><path d="M.6 .6H6.500L9.400 3.600V12.400H.6Z M6.500 .6V3.600H9.400" fill="none" stroke="#9a9a9a" stroke-width="1"/></svg>6666(1).xlsx</div><svg class="abs" style="left:347.7px;top:504.0px" width="26.6" height="31.8" viewBox="0 0 30 36" preserveAspectRatio="none"><path d="M1.5 0H21L30 9V34.5a1.5 1.5 0 0 1-1.5 1.5H1.5A1.5 1.5 0 0 1 0 34.5V1.5A1.5 1.5 0 0 1 1.5 0Z" fill="#1f7a48"/><path d="M21 0L30 9H22.5A1.5 1.5 0 0 1 21 7.5Z" fill="#4e9c70"/><path d="M10.5 17L19.5 29M19.5 17L10.5 29" stroke="#fff" stroke-width="2.4" fill="none"/></svg>
<div class="abs" style="left:181px;top:557.4px;width:209.7px;height:79.6px;background:#fff;border-radius:4px"></div><div class="abs" style="left:390px;top:567.4px;width:0;height:0;border-top:5px solid transparent;border-bottom:5px solid transparent;border-left:5px solid #fff"></div><div class="abs" style="left:191px;top:566.9px;font-size:14.2px;line-height:20px;color:#262626;white-space:nowrap;letter-spacing:.15px">6666(1).xlsx</div><div class="abs" style="left:191px;top:586.9px;font-size:12px;line-height:20px;color:#a0a0a0;white-space:nowrap;letter-spacing:.3px">11.1K</div><div class="abs" style="left:191px;top:613.9px;width:189px;height:1.4px;background:#ececec"></div><svg class="abs" style="left:190px;top:618.4px" width="18" height="14" viewBox="0 0 18 14"><ellipse cx="7" cy="5.5" rx="6.5" ry="5" fill="#7bd84a"/><ellipse cx="12.5" cy="9" rx="4.5" ry="3.6" fill="#e6e6e6"/></svg><div class="abs" style="left:211px;top:615.9px;font-size:12px;line-height:20px;color:#a8a8a8;white-space:nowrap">微信电脑版</div><svg class="abs" style="left:346px;top:566.9px" width="29.6" height="36" viewBox="0 0 30 36" preserveAspectRatio="none"><path d="M1.5 0H21L30 9V34.5a1.5 1.5 0 0 1-1.5 1.5H1.5A1.5 1.5 0 0 1 0 34.5V1.5A1.5 1.5 0 0 1 1.5 0Z" fill="#1f7a48"/><path d="M21 0L30 9H22.5A1.5 1.5 0 0 1 21 7.5Z" fill="#4e9c70"/><path d="M10.5 17L19.5 29M19.5 17L10.5 29" stroke="#fff" stroke-width="2.4" fill="none"/></svg>
<div class="abs" style="left:404.6px;top:557.4px;width:30px;height:30px;border-radius:3px;background:linear-gradient(to bottom,#b9a88f 0,#e6d6b6 30%,#caa57a 48%,#1d2b45 62%,#0f1a30 100%)"></div>
<div class="wb" style="left:138.2px;top:650.8px;width:252.5px;height:48.8px"></div><div class="abs" style="left:390px;top:659.8px;width:0;height:0;border-top:5px solid transparent;border-bottom:5px solid transparent;border-left:5px solid #95ec69"></div><div class="wt" style="left:150px;top:656.4px">这几个品昨天又出订单了 这次需要报</div><div class="wt" style="left:150px;top:673.2px">备处理了。</div>
<div class="abs" style="left:404.6px;top:651.2px;width:30px;height:30px;border-radius:3px;background:linear-gradient(to bottom,#b9a88f 0,#e6d6b6 30%,#caa57a 48%,#1d2b45 62%,#0f1a30 100%)"></div>
<div class="abs" style="left:19.8px;top:715.2px;width:34px;height:29.6px;border-radius:3px;overflow:hidden;background:#a9b4c4"><div class="abs" style="left:0;top:0;width:34px;height:12px;background:linear-gradient(to right,#9aa3b4,#b8b6c2 50%,#d8c36a 80%,#e9d66a)"></div><div class="abs" style="left:0;top:12px;width:34px;height:10px;background:linear-gradient(to right,#6f8fc0,#c9b8b0 35%,#d0a89a 55%,#5a6a86 80%,#3c4a66)"></div><div class="abs" style="left:0;top:22px;width:34px;height:8px;background:linear-gradient(to right,#c24a4a,#e8e0d8 30%,#e08a3a 55%,#d8b04a 80%,#c8c0b0)"></div><div class="abs" style="left:5px;top:6px;width:7px;height:12px;border-radius:3px;background:#3a4660"></div><div class="abs" style="left:22px;top:8px;width:8px;height:12px;border-radius:3px;background:#2e3850"></div></div>
<div class="abs" style="left:67.9px;top:716.6px;width:51.7px;height:31px;background:#fff;border-radius:4px"></div>
<div class="abs" style="left:63.5px;top:726px;width:0;height:0;border-top:5px solid transparent;border-bottom:5px solid transparent;border-right:5px solid #fff"></div>
<div class="wt" style="left:80px;top:722px">好的</div>
</div>
</div>
<div class="abs" style="left:1890px;top:0;width:17px;height:819px;background:#f0f0f0"></div>
<div class="abs" style="left:1895px;top:80px;width:8px;height:677px;background:#d2d2d2;border-radius:4px"></div>
<div class="abs" style="left:1896px;top:798.5px;width:0;height:0;border-left:3px solid transparent;border-right:3px solid transparent;border-top:5px solid #777"></div>
<div class="abs" style="left:0;top:812px;width:1907px;height:7px;background:#f0f0f0;border-top:1px solid #d0d0d0"></div>
<div class="abs" style="left:413px;top:812px;width:65px;height:7px;background:#fff"></div>
<div class="abs" style="left:196px;top:816px;width:1px;height:3px;background:#bbb"></div>
<div class="abs" style="left:304px;top:816px;width:1px;height:3px;background:#bbb"></div>
<div class="abs" style="left:1898px;top:40.5px;width:6px;height:1.2px;background:#999"></div>
<div class="abs" style="left:1897.5px;top:50.5px;width:0;height:0;border-left:3px solid transparent;border-right:3px solid transparent;border-bottom:5px solid #777"></div>
<div class="abs" style="left:1898px;top:33px;width:9px;height:1px;background:#ddd"></div>

<div id="win">
<div class="abs" style="left:0;top:0;width:1890px;height:264px;background:linear-gradient(to right,#999 0,#999 1850px,#8f8f8f 1854px,#a6a6a6 1873px)"></div>
<div class="abs" style="left:0;top:0;width:1873px;height:37px;background:#004b91"></div>
<div class="abs" style="left:1px;top:0;width:30px;height:27px;background:#126b60"></div>
<div class="abs" style="left:0;top:37px;width:186px;height:226px;background:linear-gradient(to bottom,#23262e 0,#23262e 205px,#18191d 206px)"></div>
<div class="abs" style="left:1854px;top:77px;width:19px;height:10px;background:#8e9093"></div>
<div class="abs" style="left:1873px;top:0;width:17px;height:263px;background:#f1f1f1"></div>
<div class="abs" style="left:1875px;top:4px;width:13px;height:217px;background:#c1c1c1"></div>
<div class="abs" style="left:1878px;top:251px;width:0;height:0;border-left:4px solid transparent;border-right:4px solid transparent;border-top:5px solid #505050"></div>
<div class="abs" style="left:0;top:263px;width:1897px;height:7px;background:linear-gradient(to bottom,#a4c8ec,#b9dbf9 35%,#b9dbf9 80%,#e6f1fc)"></div>
<div class="abs" style="left:1890px;top:0;width:7px;height:270px;background:linear-gradient(to right,#a9cdf0,#b7d9f8 50%,#9fc3ea);border-bottom-right-radius:6px"></div>
<div class="abs" style="left:-5px;top:-5px;width:1903px;height:275.6px;border:1.3px solid #1d2227;border-bottom-right-radius:7px"></div>
<div id="modal">
<div id="mtitle">进销存</div>
<div class="lbl" style="left:15px">报表陈列:</div>
<div class="lbl" style="left:245px">起始日期:</div>
<div class="lbl" style="left:475px">结束日期:</div>
<div class="lbl" style="left:705px">商品编码:</div>
<div class="lbl" style="left:935px">商品名称:</div>
<div class="lbl" style="left:1165px">门店名称:</div>
<div class="inp" style="left:80px;color:#8a8a8a;padding-left:13.5px">按部门商品汇总<svg class="abs" style="right:4px;top:11px" width="11" height="8" viewBox="0 0 11 8"><path d="M1 1.2 L5.5 6 L10 1.2" fill="none" stroke="#666" stroke-width="2"/></svg></div>
<div class="inp" style="left:310px;font-size:14px;letter-spacing:.45px;padding-left:11px;color:#222">2025-12-15<svg class="abs" style="right:13.5px;top:9.5px" width="11" height="12" viewBox="0 0 12 13"><rect x="1" y="2" width="10" height="10" rx="1" fill="none" stroke="#222" stroke-width="1.6"/><rect x="1" y="2" width="10" height="3.2" fill="#222"/><rect x="3" y="0.3" width="1.6" height="2.5" fill="#222"/><rect x="7.4" y="0.3" width="1.6" height="2.5" fill="#222"/></svg></div>
<div class="inp" style="left:540px;font-size:14px;letter-spacing:.45px;padding-left:11px;color:#222">2025-12-30<svg class="abs" style="right:13.5px;top:9.5px" width="11" height="12" viewBox="0 0 12 13"><rect x="1" y="2" width="10" height="10" rx="1" fill="none" stroke="#222" stroke-width="1.6"/><rect x="1" y="2" width="10" height="3.2" fill="#222"/><rect x="3" y="0.3" width="1.6" height="2.5" fill="#222"/><rect x="7.4" y="0.3" width="1.6" height="2.5" fill="#222"/></svg></div>
<div class="inp" style="left:770px;font-size:13.5px">408600841</div>
<div class="inp" style="left:1000px;color:#999">模糊查找</div>
<div class="inp" style="left:1230px"></div>
<div class="btn" style="left:1395px;background:#0670d4;color:#fff">查询</div>
<div class="btn" style="left:1490px;background:#fff;border:1px solid #dcdcdc;color:#777;line-height:33px">导出</div>
<div class="abs" style="left:15px;top:98px;height:20px;line-height:20px;white-space:nowrap;font-size:13px;color:#444"><span style="color:#f00;letter-spacing:1px">注:</span>&nbsp;&nbsp;导出文件分部门汇总、商品汇总、部门商品汇总三个表，不需分开导出。输入多个商品编码时<span style="letter-spacing:1.2px">","</span>分割。</div>
<div id="tbl">
<div class="c h" style="left:0px;width:81px">部门编码</div>
<div class="c d" style="left:0px;width:81px;font-size:13.5px">1005</div>
<div class="c f" style="left:0px;width:81px">合计:</div>
<div class="c h" style="left:81px;width:82px">部门名称</div>
<div class="c d" style="left:81px;width:82px">南浦路店</div>
<div class="c f" style="left:81px;width:82px"></div>
<div class="c h" style="left:163px;width:100px">商品编码</div>
<div class="c d" style="left:163px;width:100px;font-size:13.5px">408600841</div>
<div class="c f" style="left:163px;width:100px"></div>
<div class="c h" style="left:263px;width:277px">商品名称</div>
<div class="c d" style="left:263px;width:277px">先行秀丽随手杯CSG-200XL（200ml）</div>
<div class="c f" style="left:263px;width:277px"></div>
<div class="c h" style="left:540px;width:135px">商品条码</div>
<div class="c d" style="left:540px;width:135px;font-size:13.5px">6926702224916</div>
<div class="c f" style="left:540px;width:135px"></div>
<div class="c h" style="left:675px;width:52px">品牌</div>
<div class="c d" style="left:675px;width:52px">先行</div>
<div class="c f" style="left:675px;width:52px"></div>
<div class="c h" style="left:727px;width:161px">规格</div>
<div class="c d" style="left:727px;width:161px">200ml浅嘀绿/茉莫粉</div>
<div class="c f" style="left:727px;width:161px"></div>
<div class="c h" style="left:888px;width:81px">进货数量</div>
<div class="c d" style="left:888px;width:81px;font-size:13.5px">2.00</div>
<div class="c f" style="left:888px;width:81px;font-size:13.5px">2.00</div>
<div class="c h" style="left:969px;width:122px">进货金额(含税)</div>
<div class="c d" style="left:969px;width:122px;font-size:13.5px">38.500</div>
<div class="c f" style="left:969px;width:122px;font-size:13.5px">38.50</div>
<div class="c h" style="left:1091px;width:82px">销售数量</div>
<div class="c d" style="left:1091px;width:82px;font-size:13.5px">5.00</div>
<div class="c f" style="left:1091px;width:82px;font-size:13.5px">5.00</div>
<div class="c h" style="left:1173px;width:81px">销售金额</div>
<div class="c d" style="left:1173px;width:81px;font-size:13.5px">164.500</div>
<div class="c f" style="left:1173px;width:81px;font-size:13.5px">164.50</div>
<div class="c h" style="left:1254px;width:82px">销售成本</div>
<div class="c d" style="left:1254px;width:82px;font-size:13.5px">115.000</div>
<div class="c f" style="left:1254px;width:82px;font-size:13.5px">115.00</div>
<div class="c h" style="left:1336px;width:81px">折扣折让</div>
<div class="c d" style="left:1336px;width:81px;font-size:13.5px">20.000</div>
<div class="c f" style="left:1336px;width:81px;font-size:13.5px">20.00</div>
<div class="c h" style="left:1417px;width:82px">期末数量</div>
<div class="c d" style="left:1417px;width:82px;font-size:13.5px">0.00</div>
<div class="c f" style="left:1417px;width:82px;font-size:13.5px">0.00</div>
<div class="c h" style="left:1499px;width:81px">期末金额</div>
<div class="c d" style="left:1499px;width:81px;font-size:13.5px">0.000</div>
<div class="c f" style="left:1499px;width:81px;font-size:13.5px">0.00</div>
<div class="c h" style="left:1580px;width:111px">物流可用库存</div>
<div class="c d" style="left:1580px;width:111px;font-size:13.5px">0.000</div>
<div class="c f" style="left:1580px;width:111px"></div>
<div class="c h" style="left:1691px;width:111px">物流三方库存</div>
<div class="c d" style="left:1691px;width:111px;font-size:13.5px">0.000</div>
<div class="c f" style="left:1691px;width:111px"></div>
<div class="abs" style="left:1802px;top:0;width:18px;height:95px;background:#f1f1f1"></div>
<div class="abs" style="left:1804px;top:17px;width:13px;height:55px;background:#c1c1c1"></div>
<div class="abs" style="left:1807px;top:8px;width:0;height:0;border-left:4px solid transparent;border-right:4px solid transparent;border-bottom:5px solid #a3a3a3"></div>
<div class="abs" style="left:1807px;top:83px;width:0;height:0;border-left:4px solid transparent;border-right:4px solid transparent;border-top:5px solid #505050"></div>
</div>
</div>
<div class="abs" style="left:1837.5px;top:-12px;width:29px;height:29px;border-radius:50%;background:#7b7b7b;border:2.5px solid #fff"><svg class="abs" style="left:6px;top:7px" width="12" height="12" viewBox="0 0 12 12"><path d="M1.2 1.2 L10.8 10.8 M10.8 1.2 L1.2 10.8" stroke="#fff" stroke-width="2" fill="none"/></svg></div>
</div>
</body>
</html>
